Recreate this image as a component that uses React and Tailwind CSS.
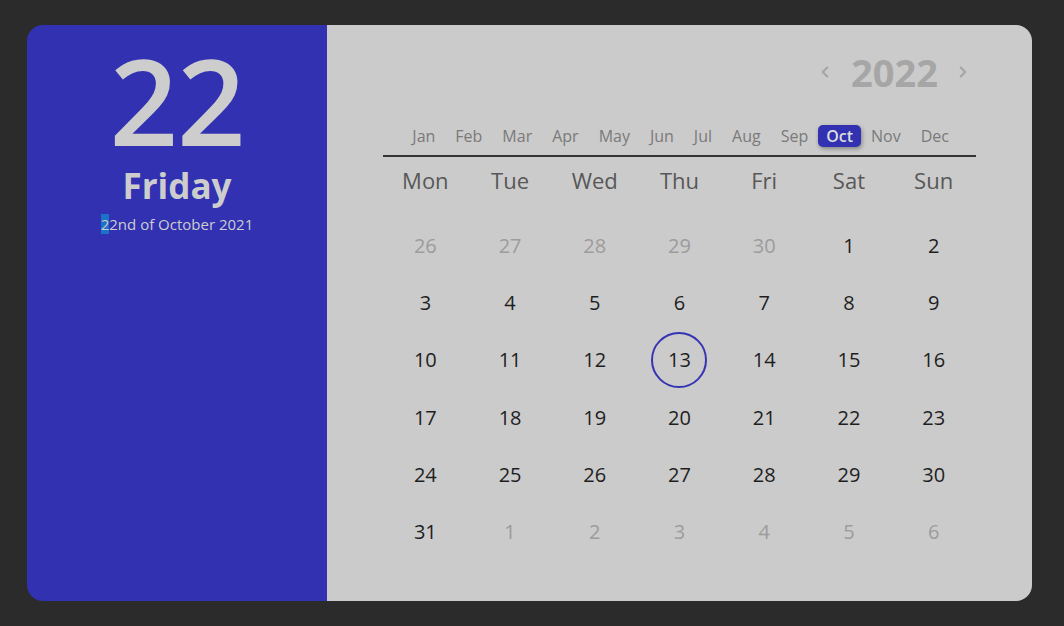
import React from "react";
import { ChevronLeft, ChevronRight } from "lucide-react";

const months = ["Jan", "Feb", "Mar", "Apr", "May", "Jun", "Jul", "Aug", "Sep", "Oct", "Nov", "Dec"];
const weekdays = ["Mon", "Tue", "Wed", "Thu", "Fri", "Sat", "Sun"];

function buildDays() {
    const days = [];
    [26, 27, 28, 29, 30].forEach((d) => days.push({ d, muted: true }));
    for (let d = 1; d <= 31; d++) days.push({ d, muted: false });
    for (let d = 1; d <= 6; d++) days.push({ d, muted: true });
    return days;
}

export default function App() {
    const days = buildDays();

    return (
        <div
            className="min-h-screen w-full bg-[#2b2b2b] px-[27px] pt-[25px]"
            style={{ fontFamily: "'Open Sans', 'Liberation Sans', sans-serif" }}
        >
            <div className="flex h-[576px] w-[1005px] overflow-hidden rounded-[16px]">
                {/* left side */}
                <aside className="flex w-[300px] flex-col items-center bg-[#3131b2] text-[#cdcdcd]">
                    <div className="mt-[15px] text-[120px] font-semibold leading-[120px] tracking-[-1px]">22</div>
                    <div className="mt-[4px] text-[35px] font-bold leading-[44px]">Friday</div>
                    <div className="mt-[6px] text-[15px] leading-[20px]">
                        <span className="bg-[#1a73c9]">2</span>2nd of October 2021
                    </div>
                </aside>

                {/* right side */}
                <section className="flex-1 bg-[#cbcbcb] px-[56px]">
                    <div className="mt-[24px] flex items-center justify-end pr-[4px] text-[#a6a6a6]">
                        <ChevronLeft className="h-[18px] w-[18px]" strokeWidth={3} />
                        <span className="ml-[17px] mr-[16px] text-[38px] font-bold leading-[46px]">2022</span>
                        <ChevronRight className="h-[18px] w-[18px]" strokeWidth={3} />
                    </div>

                    <div className="mt-[30px] flex justify-end pr-[17px] text-[16px] text-[#7a7a7a]">
                        {months.map((m) =>
                            m === "Oct" ? (
                                <span
                                    key={m}
                                    className="rounded-[5px] bg-[#3131b2] px-[8px] font-semibold leading-[22px] text-[#dcdcdc] shadow-[1px_2px_4px_rgba(0,0,0,0.35)]"
                                >
                                    {m}
                                </span>
                            ) : (
                                <span key={m} className="px-[10px] leading-[22px]">
                                    {m}
                                </span>
                            )
                        )}
                    </div>

                    <div className="mt-[8px] h-[2px] w-full bg-[#333333]" />

                    <div className="grid grid-cols-7 text-center">
                        {weekdays.map((w) => (
                            <div key={w} className="pt-[8px] text-[22px] leading-[30px] text-[#585858]">
                                {w}
                            </div>
                        ))}
                    </div>

                    <div className="mt-[22px] grid grid-cols-7 text-center">
                        {days.map((day, i) => (
                            <div key={i} className="flex h-[57.3px] items-center justify-center">
                                {!day.muted && day.d === 13 ? (
                                    <span className="flex h-[56px] w-[56px] items-center justify-center rounded-full border-2 border-[#3535b3] text-[20px] font-medium text-[#1e1e1e]">
                                        {day.d}
                                    </span>
                                ) : (
                                    <span
                                        className={
                                            day.muted
                                                ? "text-[20px] text-[#9c9c9c]"
                                                : "text-[20px] font-medium text-[#1e1e1e]"
                                        }
                                    >
                                        {day.d}
                                    </span>
                                )}
                            </div>
                        ))}
                    </div>
                </section>
            </div>
        </div>
    );
}
